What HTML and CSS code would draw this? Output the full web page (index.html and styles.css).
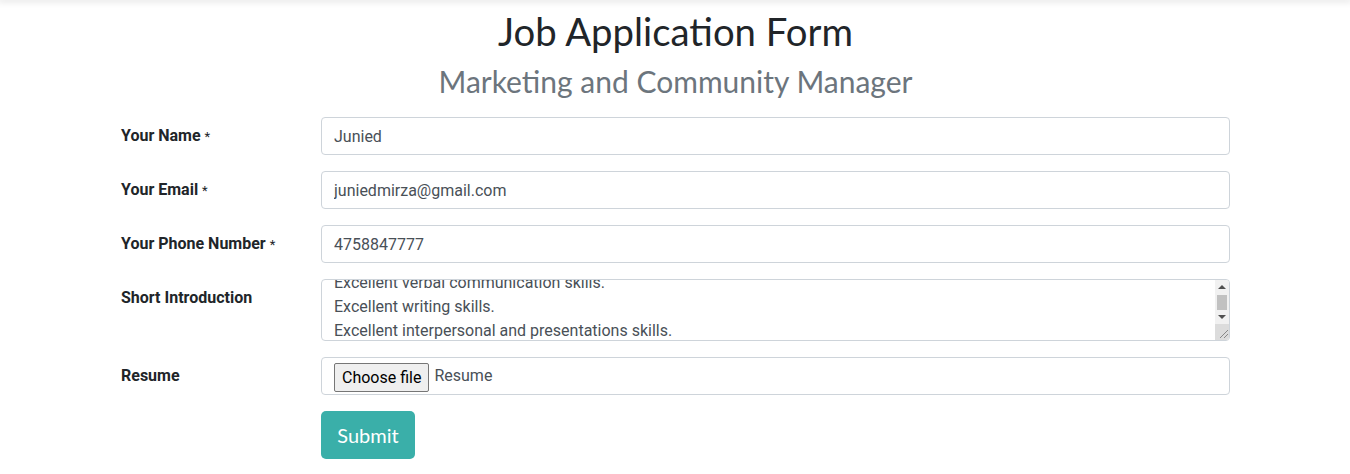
FILE: index.html
```html
<!DOCTYPE html>
<html lang="en">
<head>
    <meta charset="UTF-8">
    <meta name="viewport" content="width=device-width, initial-scale=1.0">
    <title>Job Application Form</title>
    <link rel="stylesheet" href="styles.css">
</head>
<body>
<div class="topbar"></div>
<div class="main">
    <div class="heading">
        <h1 class="title">Job Application Form</h1>
        <h2 class="subtitle">Marketing and Community Manager</h2>
    </div>

    <form class="apply-form" onsubmit="return false">
        <div class="row">
            <label class="lbl" for="name">Your Name <span class="req">*</span></label>
            <input type="text" id="name" class="field" value="Junied">
        </div>
        <div class="row">
            <label class="lbl" for="email">Your Email <span class="req">*</span></label>
            <input type="email" id="email" class="field" value="juniedmirza@gmail.com">
        </div>
        <div class="row">
            <label class="lbl" for="phone">Your Phone Number <span class="req">*</span></label>
            <input type="text" id="phone" class="field" value="4758847777">
        </div>
        <div class="row">
            <label class="lbl" for="intro">Short Introduction</label>
            <div class="intro-wrap">
                <textarea id="intro" class="field intro">Marketing experience of 3+ years.
Strong social media knowledge.
Excellent verbal communication skills.
Excellent writing skills.
Excellent interpersonal and presentations skills.
Team player with a positive attitude.
Available to start immediately.</textarea>
                <!-- drawn scrollbar, the real one is hidden in the screenshot -->
                <div class="sbar">
                    <div class="sbar-btn"><span class="arrow-up"></span></div>
                    <div class="sbar-track"><div class="sbar-thumb"></div></div>
                    <div class="sbar-btn"><span class="arrow-down"></span></div>
                    <div class="sbar-corner">
                        <svg width="15" height="16" viewBox="0 0 15 16">
                            <path d="M5 14 L13 6 M9 14 L13 10" stroke="#888" stroke-width="1" fill="none"/>
                        </svg>
                    </div>
                </div>
            </div>
        </div>
        <div class="row">
            <label class="lbl">Resume</label>
            <div class="field file-field">
                <button type="button" class="file-btn">Choose file</button>
                <span class="file-name">Resume</span>
            </div>
        </div>
        <div class="row">
            <div class="lbl"></div>
            <div><button type="submit" class="submit">Submit</button></div>
        </div>
    </form>
</div>

<script>
// scroll the intro box a bit, like the user already typed in it
var intro = document.getElementById('intro');
intro.scrollTop = 63;
</script>
</body>
</html>
```

FILE: styles.css
```css
* {
    margin: 0;
    padding: 0;
    box-sizing: border-box;
}
body {
    font-family: Roboto, "Liberation Sans", sans-serif;
    color: #212529;
    background: #fff;
    overflow: hidden;
}
.topbar {
    height: 0;
    box-shadow: 0 0 6px 2px rgba(0, 0, 0, 0.12);
}
.main {
    width: 1110px;
    margin: 0 auto;
    padding-left: 1px;
}
.heading {
    text-align: center;
    padding-top: 8px;
}
.title {
    font-family: Lato, "Open Sans", sans-serif;
    font-weight: 400;
    font-size: 38.3px;
    line-height: 46px;
    color: #212529;
}
.subtitle {
    font-family: Lato, "Open Sans", sans-serif;
    font-weight: 400;
    font-size: 30px;
    line-height: 48px;
    margin-top: 3px;
    color: #6c757d;
}
.apply-form {
    margin-top: 12px;
}
.row {
    display: flex;
    margin-bottom: 16px;
}
.lbl {
    width: 200px;
    flex: none;
    font-size: 16px;
    font-weight: 700;
    padding-top: 9px;
    line-height: 20px;
}
.req {
    font-size: 13px;
    font-weight: 400;
}
.field {
    flex: 1;
    height: 38px;
    border: 1px solid #ced4da;
    border-radius: 4px;
    padding: 6px 12px;
    font-family: Roboto, "Liberation Sans", sans-serif;
    font-size: 16px;
    line-height: 24px;
    color: #495057;
    background: #fff;
}
.intro-wrap {
    flex: 1;
    display: flex;
    position: relative;
}
.intro {
    height: 62px;
    resize: none;
    overflow: hidden;
    padding-right: 30px;
}
.sbar {
    position: absolute;
    top: 1px;
    right: 1px;
    bottom: 1px;
    width: 14px;
    background: #f1f1f1;
    display: flex;
    flex-direction: column;
    border-top-right-radius: 3px;
    border-bottom-right-radius: 3px;
    overflow: hidden;
}
.sbar-btn {
    height: 14px;
    display: flex;
    align-items: center;
    justify-content: center;
}
.arrow-up {
    border-left: 4px solid transparent;
    border-right: 4px solid transparent;
    border-bottom: 4px solid #505050;
}
.arrow-down {
    border-left: 4px solid transparent;
    border-right: 4px solid transparent;
    border-top: 4px solid #505050;
}
.sbar-track {
    flex: 1;
    padding: 1px 2px 0;
}
.sbar-thumb {
    height: 15px;
    background: #c1c1c1;
}
.sbar-corner {
    height: 16px;
    background: #dcdcdc;
}
.sbar-corner svg {
    display: block;
}
.file-field {
    display: flex;
    align-items: center;
}
.file-btn {
    font-family: Roboto, "Liberation Sans", sans-serif;
    font-size: 16px;
    color: #000;
    background: #efefef;
    border: 1px solid #767676;
    border-radius: 2px;
    padding: 3px 7px;
    line-height: 21px;
    height: 29px;
    margin-top: 2px;
    margin-right: 5px;
}
.file-name {
    color: #495057;
}
.submit {
    font-family: Lato, "Open Sans", sans-serif;
    font-size: 20px;
    color: #fff;
    background: #3aafa9;
    border: none;
    border-radius: 5px;
    width: 94px;
    height: 48px;
}
```
